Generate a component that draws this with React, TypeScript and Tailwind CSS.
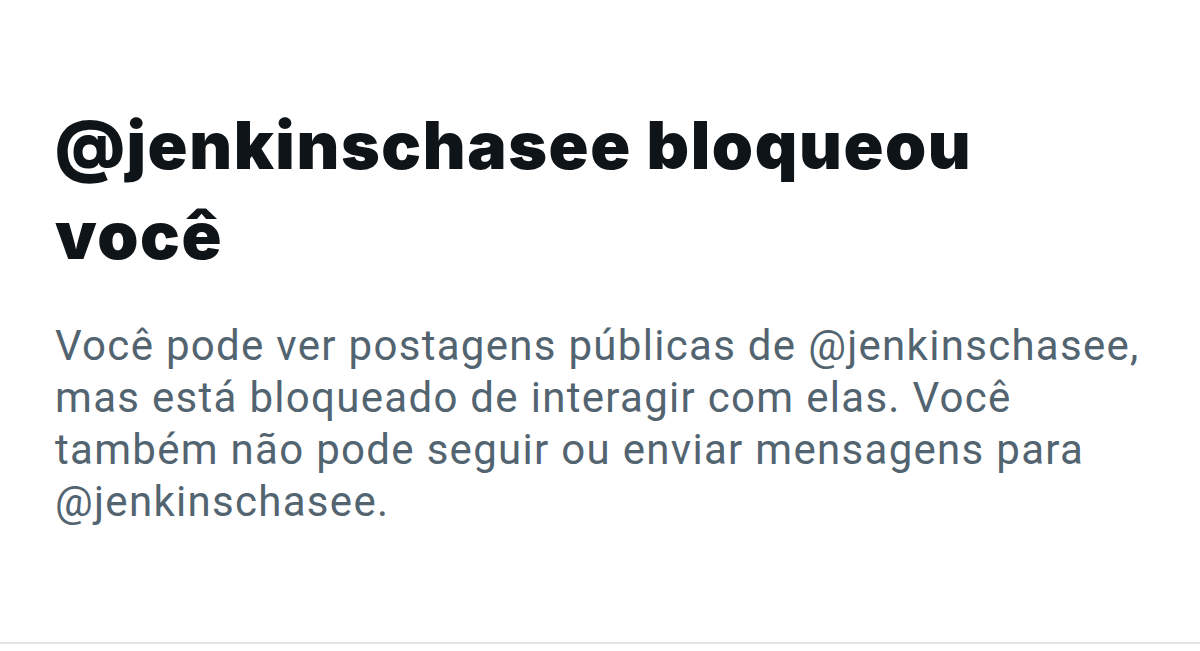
export default function App() {
  return (
    <div className="w-[1200px] h-[651px] bg-white overflow-hidden">
      <div className="h-[644px] border-b-2 border-[#e3e3e3] pl-[55px] pt-[100px]">
        <h1
          className="text-[66px] leading-[90px] font-black text-[#0f1419] tracking-[1.6px]"
          style={{ fontFamily: "Inter, 'Noto Sans', sans-serif" }}
        >
          @jenkinschasee bloqueou
          <br />
          você
        </h1>
        <p
          className="mt-[40px] text-[42px] leading-[52px] text-[#536471] tracking-[1.3px] w-[1140px]"
          style={{ fontFamily: "Roboto, Lato, sans-serif" }}
        >
          Você pode ver postagens públicas de @jenkinschasee,
          <br />
          mas está bloqueado de interagir com elas. Você
          <br />
          também não pode seguir ou enviar mensagens para
          <br />
          @jenkinschasee.
        </p>
      </div>
    </div>
  );
}
